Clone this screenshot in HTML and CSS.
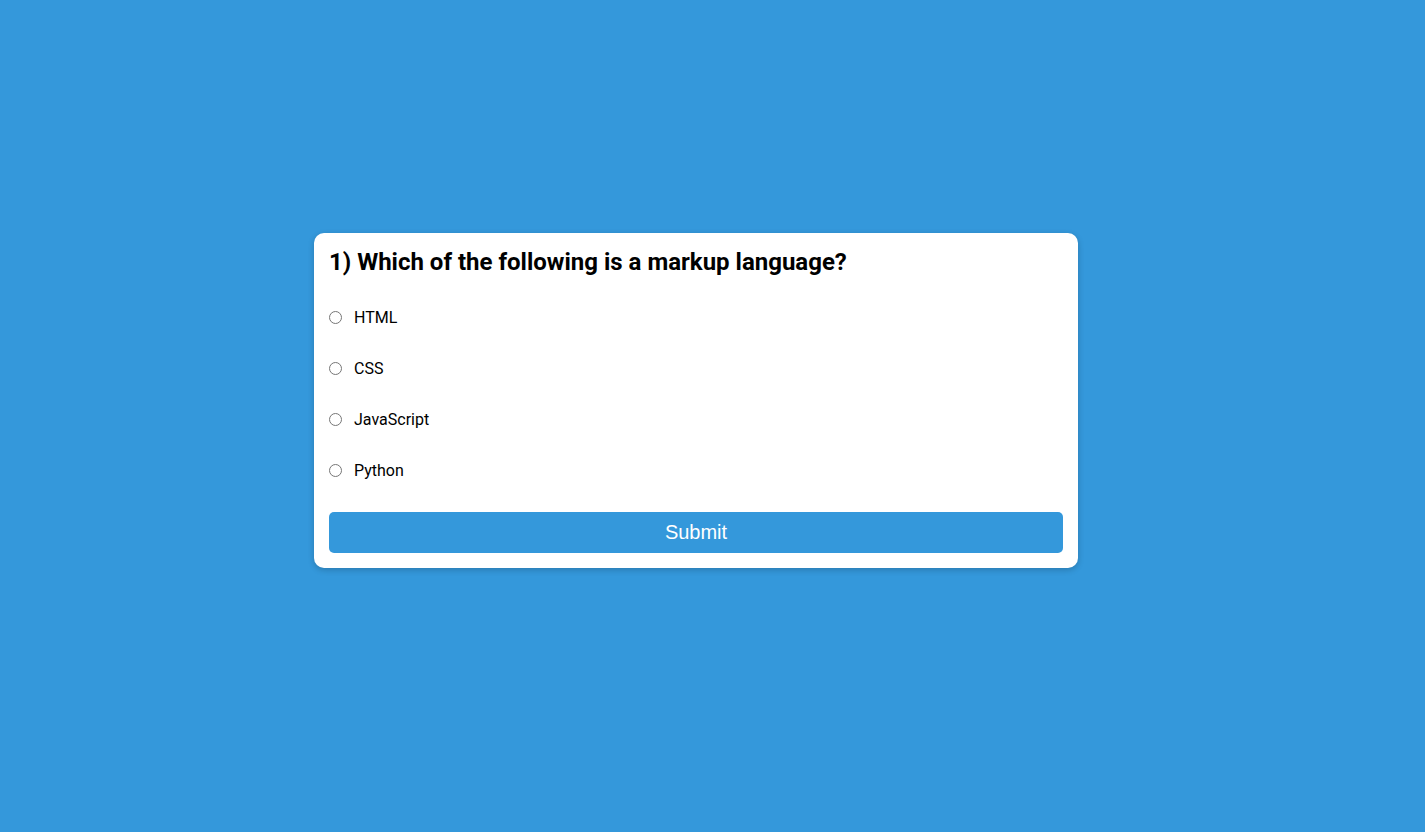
FILE: index.html
```html
<!DOCTYPE html>
<html lang="en">
<head>
<meta charset="utf-8">
<title>Quiz</title>
<link rel="stylesheet" href="styles.css">
</head>
<body>
  <div class="page">
    <div class="quiz">
      <h2 class="question">1) Which of the following is a markup language?</h2>
      <ul class="answers">
        <li class="answer"><input type="radio" name="answer" id="a" class="radio"><label for="a">HTML</label></li>
        <li class="answer"><input type="radio" name="answer" id="b" class="radio"><label for="b">CSS</label></li>
        <li class="answer"><input type="radio" name="answer" id="c" class="radio"><label for="c">JavaScript</label></li>
        <li class="answer"><input type="radio" name="answer" id="d" class="radio"><label for="d">Python</label></li>
      </ul>
      <button class="submit">Submit</button>
    </div>
  </div>
</body>
</html>
```
FILE: styles.css
```css
html, body {
  margin: 0;
  padding: 0;
}
body {
  background: #3498db;
  font-family: Roboto, "Liberation Sans", sans-serif;
}
.page {
  min-height: 100vh;
  display: flex;
  align-items: center;
  justify-content: center;
}
.quiz {
  width: 764px;
  box-sizing: border-box;
  background: #fff;
  border-radius: 10px;
  padding: 15px;
  margin: 0 33px 32px 0;
  box-shadow: 0 2px 6px rgba(0, 0, 0, 0.2);
}
.question {
  margin: 0;
  font-size: 24px;
  font-weight: 700;
  line-height: 28px;
  color: #000;
}
.answers {
  list-style: none;
  margin: 32px 0 0;
  padding: 0;
  display: flex;
  flex-direction: column;
  gap: 32px;
}
.answer {
  display: flex;
  align-items: center;
  font-size: 16px;
  line-height: 19px;
  color: #000;
}
.radio {
  margin: 0 12px 0 0;
  width: 13px;
  height: 13px;
}
.submit {
  display: block;
  width: 100%;
  margin-top: 32px;
  border: none;
  border-radius: 5px;
  background: #3498db;
  color: #fff;
  font-family: "Liberation Sans", Arial, sans-serif;
  font-size: 20px;
  line-height: 23px;
  padding: 9px 0;
  cursor: pointer;
}
```
